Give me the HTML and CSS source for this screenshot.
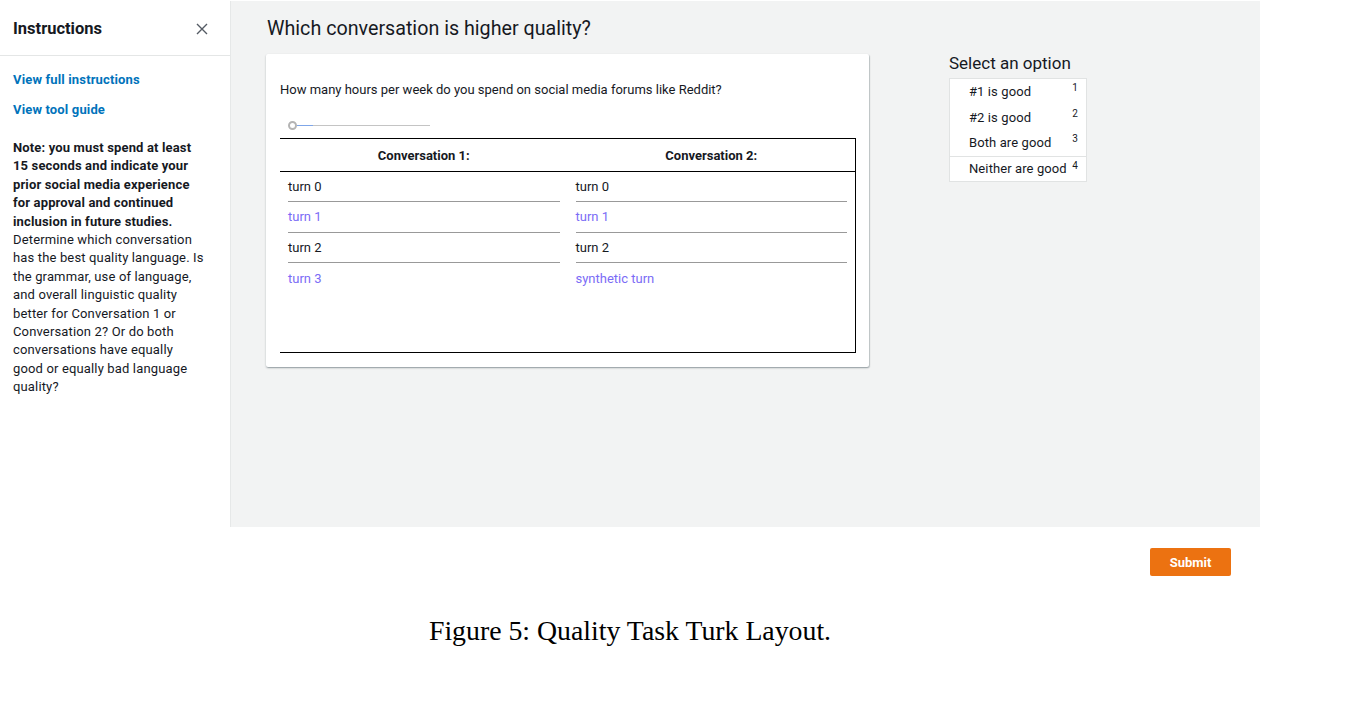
FILE: index.html
```html
<!DOCTYPE html>
<html>
<head>
<meta charset="utf-8">
<link rel="stylesheet" href="styles.css">
</head>
<body>
<div class="figure">
  <div class="app">
    <aside class="sidebar">
      <div class="side-head">
        <span class="side-title">Instructions</span>
        <svg class="close" width="12" height="12" viewBox="0 0 12 12"><path d="M1 1L11 11M11 1L1 11" stroke="#545b64" stroke-width="1.4" fill="none"/></svg>
      </div>
      <div class="side-body">
        <a class="link">View full instructions</a>
        <a class="link">View tool guide</a>
        <p class="note"><b>Note: you must spend at least 15 seconds and indicate your prior social media experience for approval and continued inclusion in future studies.</b> Determine which conversation has the best quality language. Is the grammar, use of language, and overall linguistic quality better for Conversation 1 or Conversation 2? Or do both conversations have equally good or equally bad language quality?</p>
      </div>
    </aside>
    <main class="main">
      <div class="content">
        <h1 class="title">Which conversation is higher quality?</h1>
        <div class="card">
          <p class="question">How many hours per week do you spend on social media forums like Reddit?</p>
          <div class="slider"><span class="knob"></span><span class="fill"></span><span class="track"></span></div>
          <div class="convs">
            <div class="col">
              <div class="col-head">Conversation 1:</div>
              <div class="turns">
                <div class="turn">turn 0</div>
                <div class="turn alt">turn 1</div>
                <div class="turn">turn 2</div>
                <div class="turn alt last">turn 3</div>
              </div>
            </div>
            <div class="col right">
              <div class="col-head">Conversation 2:</div>
              <div class="turns">
                <div class="turn">turn 0</div>
                <div class="turn alt">turn 1</div>
                <div class="turn">turn 2</div>
                <div class="turn alt last">synthetic turn</div>
              </div>
            </div>
          </div>
        </div>
      </div>
      <div class="options">
        <div class="opt-title">Select an option</div>
        <div class="opt-box">
          <div class="opt"><span>#1 is good</span><sup>1</sup></div>
          <div class="opt"><span>#2 is good</span><sup>2</sup></div>
          <div class="opt"><span>Both are good</span><sup>3</sup></div>
          <div class="opt sep"><span>Neither are good</span><sup>4</sup></div>
        </div>
      </div>
    </main>
  </div>
  <div class="footer"><button class="submit">Submit</button></div>
  <p class="caption">Figure 5: Quality Task Turk Layout.</p>
</div>
</body>
</html>
```
FILE: styles.css
```css
* { box-sizing: border-box; }
body { margin: 0; background: #fff; font-family: Roboto, "Noto Sans", sans-serif; color: #16191f; }
.figure { width: 1260px; }
.app { display: flex; height: 527px; padding-top: 1px; }
.sidebar { width: 231px; background: #fff; border-right: 1px solid #e6e8e8; flex: none; }
.side-head { height: 55px; border-bottom: 1px solid #e4e6e6; display: flex; align-items: center; justify-content: space-between; padding: 0 22px 0 13px; }
.side-title { font-size: 16.5px; font-weight: 700; color: #16191f; }
.close { margin-top: 1px; }
.side-body { padding: 15px 24px 0 13px; }
.link { display: block; color: #0073bb; font-weight: 700; font-size: 13px; letter-spacing: 0.15px; line-height: 18px; margin-bottom: 12px; }
.note { margin: 20px 0 0; font-size: 13px; letter-spacing: 0.15px; line-height: 18.4px; color: #16191f; }
.note b { font-weight: 700; }
.main { flex: 1; background: #f2f3f3; display: flex; padding: 16px 0 0 35px; }
.content { width: 603px; }
.title { margin: 0 0 13px 1px; font-size: 19.7px; font-weight: 400; line-height: 24px; color: #16191f; }
.card { background: #fff; border-radius: 2px; box-shadow: 0 1px 2px rgba(0,28,36,0.3), 1px 1px 1px rgba(0,28,36,0.15); padding: 28px 13px 14px 14px; }
.question { margin: 0; font-size: 13px; letter-spacing: 0; line-height: 16px; color: #16191f; }
.slider { display: flex; align-items: center; margin: 22px 0 0 8px; height: 10px; }
.knob { width: 9px; height: 9px; border: 2px solid #b4b4b4; border-radius: 50%; flex: none; }
.fill { width: 16px; height: 1px; background: #7fa6e8; }
.track { width: 117px; height: 1px; background: #c4c4c4; }
.convs { display: flex; margin-top: 8px; border-top: 1px solid #000; border-bottom: 1px solid #000; border-right: 1px solid #000; height: 215px; }
.col { flex: 1; }
.col-head { height: 33px; border-bottom: 1px solid #000; display: flex; align-items: center; justify-content: center; font-weight: 700; font-size: 13px; }
.turns { padding: 0 8px; }
.turn { height: 30.3px; border-bottom: 1px solid #999; font-size: 13px; display: flex; align-items: center; color: #16191f; }
.turn.alt { color: #7b6cf6; }
.turn.last { border-bottom: none; }
.options { margin-left: 80px; padding-top: 36px; }
.opt-title { font-size: 17px; line-height: 20px; color: #16191f; margin-bottom: 5px; }
.opt-box { width: 138px; border: 1px solid #e1e3e3; background: #fff; }
.opt { height: 25.5px; display: flex; justify-content: space-between; align-items: center; padding: 0 8px 0 19px; font-size: 13px; letter-spacing: 0.1px; }
.opt.sep { border-top: 1px solid #e1e3e3; }
.opt sup { font-size: 10px; align-self: flex-start; margin-top: 3px; line-height: 12px; }
.footer { display: flex; justify-content: flex-end; padding: 21px 29px 0 0; }
.submit { width: 81px; height: 28px; background: #ec7211; border: none; border-radius: 2px; color: #fff; font-family: Roboto, sans-serif; font-weight: 700; font-size: 13px; }
.caption { margin: 39px 0 0; text-align: center; font-family: "Liberation Serif", serif; font-size: 27.8px; line-height: 32px; color: #000; }
```
